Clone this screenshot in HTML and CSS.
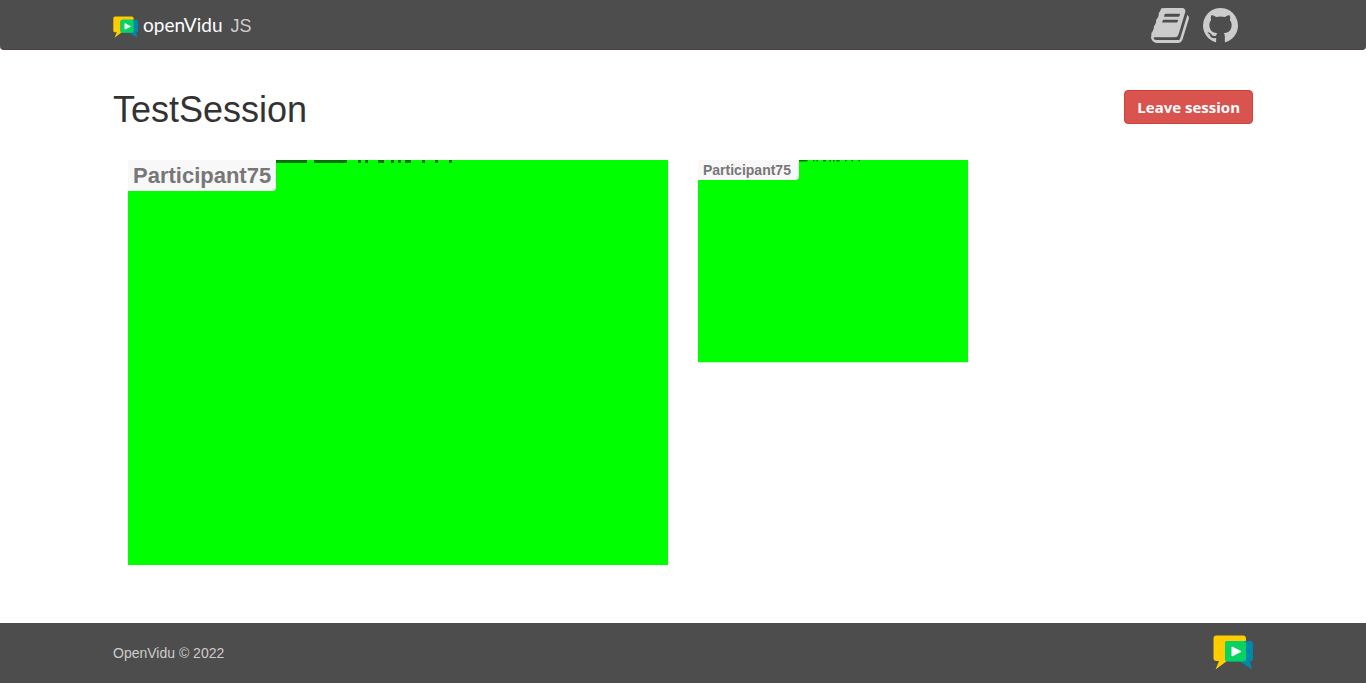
FILE: index.html
```html
<!DOCTYPE html>
<html lang="en">
<head>
<meta charset="utf-8">
<title>openVidu JS</title>
<meta name="viewport" content="width=device-width, initial-scale=1">
<link rel="stylesheet" href="styles.css">
</head>
<body>
<svg class="defs" aria-hidden="true">
  <symbol id="mark" viewBox="0 0 40 35">
    <path fill="#fc0" d="M3.500 .5H30a3 3 0 0 1 3 3V23a3 3 0 0 1-3 3H14L2.500 34.500 6 26H3.500a3 3 0 0 1-3-3V3.500a3 3 0 0 1 3-3z"/>
    <path fill="#08a" d="M15 6h22a3 3 0 0 1 3 3v14.500a3 3 0 0 1-3 3l2 8-12-8H15a3 3 0 0 1-3-3V9a3 3 0 0 1 3-3z"/>
    <rect fill="#06d362" x="12" y="6" width="21" height="20.500" rx="3"/>
    <path fill="#fff" stroke="#fff" stroke-linejoin="round" d="M19 12l9 4.500-9 4.500z"/>
  </symbol>
</svg>
<header class="navbar">
  <div class="container bar">
    <a class="brand" href="#"><svg class="brand-mark" aria-hidden="true"><use href="#mark"/></svg><span class="wordmark">openVidu</span><span class="suffix">JS</span></a>
    <nav class="links">
      <a href="#" aria-label="Documentation"><svg class="book" viewBox="0 128 1664 1536"><path d="M1639 478q40 57 18 129l-275 906q-19 64-76.500 107.500t-122.500 43.500h-923q-77 0-148.500-53.500t-99.500-131.500q-24-67-2-127 0-4 3-27t4-37q1-8-3-21.500t-3-19.500q2-11 8-21t16.500-23.500 16.500-23.500q23-38 45-91.500t30-91.500q3-10 .5-30t-.5-28q3-11 17-28t17-23q21-36 42-92t25-90q1-9-2.500-32t.5-28q4-13 22-30.500t22-22.500q19-26 42.500-84.500t27.500-96.500q1-8-3-25.500t-2-26.500q2-8 9-18t18-23 17-21q8-12 16.500-30.500t15-35 16-36 19.500-32 26.500-23.500 36-11.500 47.500 5.500l-1 3q38-9 51-9h761q74 0 114 56t18 130l-274 906q-36 119-71.500 153.500t-128.500 34.500h-869q-27 0-38 15-11 16-1 43 24 70 144 70h923q29 0 56-15.500t35-41.500l300-987q7-22 5-57 38 15 59 43zm-1064 2q-4 13 2 22.500t20 9.500h608q13 0 25.500-9.500t16.500-22.500l21-64q4-13-2-22.500t-20-9.500h-608q-13 0-25.500 9.500t-16.500 22.500zm-83 256q-4 13 2 22.500t20 9.500h608q13 0 25.500-9.500t16.500-22.500l21-64q4-13-2-22.500t-20-9.500h-608q-13 0-25.500 9.500t-16.500 22.500z"/></svg></a>
      <a href="#" aria-label="GitHub"><svg class="github" viewBox="128 128 1536 1536"><path d="M896 128q209 0 385.500 103t279.500 279.500 103 385.500q0 251-146.500 451.500t-378.500 277.500q-27 5-40-7t-13-30q0-3 .5-76.500t.5-134.500q0-97-52-142 57-6 102.500-18t94-39 81-66.500 53-105 20.500-150.500q0-119-79-206 37-91-8-204-28-9-81 11t-92 44l-38 24q-93-26-192-26t-192 26q-16-11-42.500-27t-83.500-38.500-85-13.500q-45 113-8 204-79 87-79 206 0 85 20.500 150t52.500 105 80.500 67 94 39 102.500 18q-39 36-49 103-21 10-45 15t-57 5-65.500-21.500-55.500-62.500q-19-32-48.500-52t-49.500-24l-20-3q-21 0-29 4.500t-5 11.500 9 14 13 12l7 5q22 10 43.500 38t31.500 51l10 23q13 38 44 61.500t67 30 69.500 7 55.500-3.500l23-4q0 38 .5 88.500t.5 54.500q0 18-13 30t-40 7q-232-77-378.500-277.500t-146.500-451.500q0-209 103-385.500t279.500-279.500 385.500-103z"/></svg></a>
    </nav>
  </div>
</header>
<main class="container session">
  <div class="session-head">
    <h1>TestSession</h1>
    <button class="leave" type="button">Leave session</button>
  </div>
  <div class="videos">
    <section class="main-video">
      <p class="name">Participant75</p>
      <svg class="feed" viewBox="0 0 540 405" role="img" aria-label="Main camera"><use href="#picture"/>
        <symbol id="picture" viewBox="0 0 540 405"><path fill="#0f0" d="M0 0h540v405H0z"/><path fill="#007200" d="M148 0h31v3h-31zM186 0h33v3h-33zM230 0h3v3h-3zM237 0h3v3h-3zM250 0h6v3h-6zM263 0h3v3h-3zM270 0h3v3h-3zM277 0h6v3h-6zM294 0h3v3h-3zM307 0h3v3h-3zM321 0h3v3h-3z"/></symbol>
      </svg>
    </section>
    <section class="participant">
      <p class="name small">Participant75</p>
      <svg class="feed" viewBox="0 0 540 405" role="img" aria-label="Participant camera"><use href="#picture"/></svg>
    </section>
  </div>
</main>
<footer class="footer">
  <div class="container bar">
    <p class="copyright">OpenVidu © 2022</p>
    <a class="footer-link" href="#" aria-label="OpenVidu"><svg class="footer-mark" aria-hidden="true"><use href="#mark"/></svg></a>
  </div>
</footer>
</body>
</html>
```

FILE: styles.css
```css
* { box-sizing: border-box; }
body {
  margin: 0;
  min-height: 100vh;
  display: flex;
  flex-direction: column;
  font: 14px/20px "Liberation Sans", Arial, sans-serif;
  color: #333;
  background: #fff;
}
p, h1 { margin: 0; }
a { color: inherit; text-decoration: none; }
svg { display: block; }
.defs { position: absolute; width: 0; height: 0; }
.container { width: 100%; max-width: 1170px; margin: 0 auto; padding: 0 15px; }
.bar { display: flex; align-items: center; justify-content: space-between; }
.navbar {
  background: #4d4d4d;
  border-bottom: 1px solid #4d4048;
  border-radius: 0 0 4px 4px;
  color: #ccc;
}
.navbar .bar { min-height: 49px; padding-top: 2px; }
.brand { display: flex; align-items: center; font-size: 18px; }
.brand-mark { width: 25px; height: 22px; margin: 2px 5px 0 0; }
.wordmark { color: #fff; font: 400 19px/20px Lato, sans-serif; margin-right: 8px; padding-bottom: 2px; }
.links { display: flex; gap: 14px; padding-right: 15px; fill: #ccc; }
.book { width: 38px; height: 35px; }
.github { width: 35px; height: 35px; }
.session { flex: 1; padding-top: 40px; }
.session-head { display: flex; justify-content: space-between; align-items: flex-start; }
h1 { font-size: 36px; line-height: 40px; font-weight: 400; }
.leave {
  padding: 6px 12px;
  border: 1px solid #d43f3a;
  border-radius: 4px;
  background: #d9534f;
  color: #fff;
  font: 700 15px/20px "Open Sans", sans-serif;
}
.videos { display: flex; padding: 30px 15px 0; }
.main-video, .participant { position: relative; }
.main-video { width: 540px; margin-right: 30px; }
.participant { width: 270px; }
.feed { width: 100%; height: auto; }
.name {
  position: absolute;
  top: 0;
  left: 0;
  padding: 0 5px;
  border-radius: 0 0 4px 0;
  background: #f8f8f8;
  color: #777;
  font-weight: 700;
  font-size: 22px;
  line-height: 31px;
}
.name.small { font-size: 14px; line-height: 20px; padding-right: 8px; }
.footer { background: #4d4d4d; color: #ccc; }
.footer .bar { min-height: 60px; }
.footer-link { padding-bottom: 2px; }
.footer-mark { width: 40px; height: 35px; }
```
